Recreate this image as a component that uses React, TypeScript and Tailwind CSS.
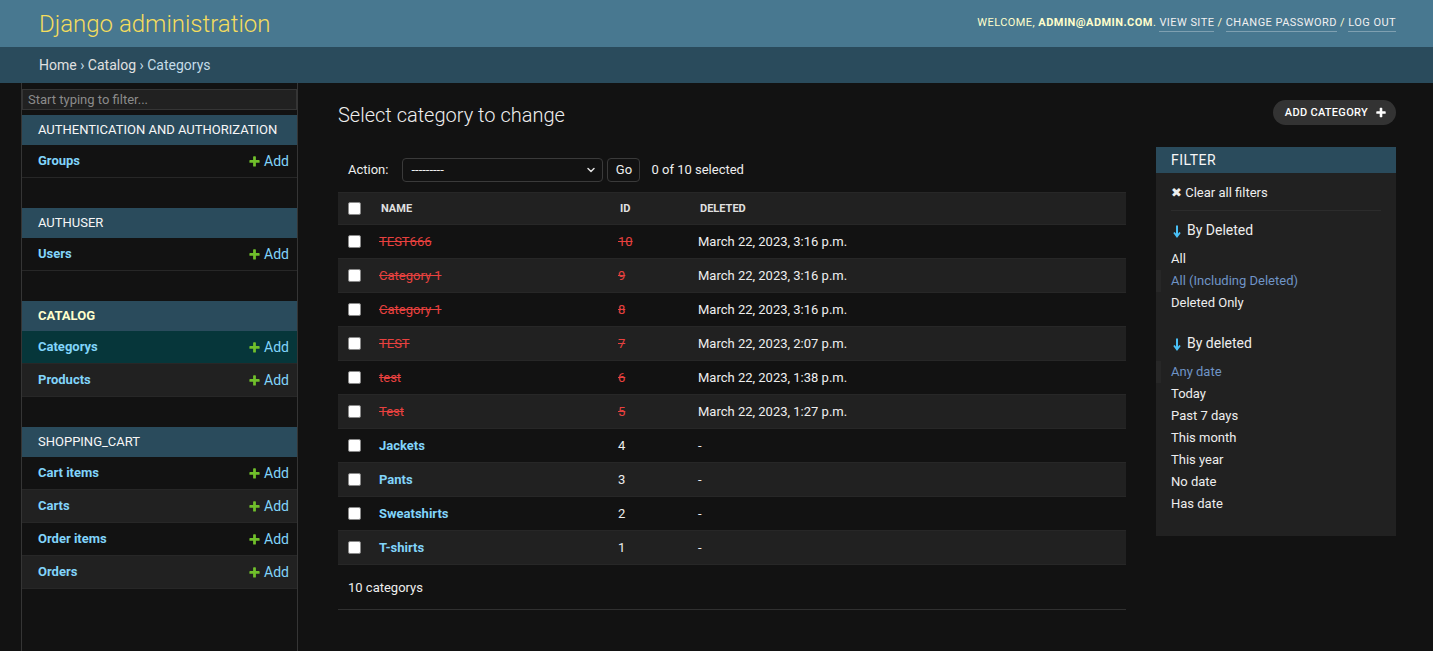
import React from "react";

const AddIcon = () => (
  <svg width="13" height="13" viewBox="0 0 1792 1792" className="mr-[3px] shrink-0">
    <path
      fill="#70bf2b"
      d="M1600 796v192q0 40-28 68t-68 28h-416v416q0 40-28 68t-68 28h-192q-40 0-68-28t-28-68v-416h-416q-40 0-68-28t-28-68v-192q0-40 28-68t68-28h416v-416q0-40 28-68t68-28h192q40 0 68 28t28 68v416h416q40 0 68 28t28 68z"
    />
  </svg>
);

const PlusWhite = () => (
  <svg width="12" height="12" viewBox="0 0 1792 1792" className="ml-[7px]">
    <path
      fill="#fff"
      d="M1600 736v192q0 40-28 68t-68 28h-416v416q0 40-28 68t-68 28h-192q-40 0-68-28t-28-68v-416h-416q-40 0-68-28t-28-68v-192q0-40 28-68t68-28h416v-416q0-40 28-68t68-28h192q40 0 68 28t28 68v416h416q40 0 68 28t28 68z"
    />
  </svg>
);

const DownArrow = () => (
  <svg width="8" height="14" viewBox="0 0 8 14" className="mr-[6px] shrink-0">
    <path d="M4 1.5V12" stroke="#4ac1f7" strokeWidth="2" />
    <path d="M1 8.5L4 12.5L7 8.5" stroke="#4ac1f7" strokeWidth="1.8" fill="none" strokeLinejoin="miter" />
  </svg>
);

const Checkbox = () => (
  <span className="block w-[13px] h-[13px] bg-white rounded-[2px] border border-[#8a8a8a]" />
);

type ModRow = { name: string; current?: boolean };
type Mod = { title: string; current?: boolean; rows: ModRow[] };

const modules: Mod[] = [
  { title: "Authentication and Authorization", rows: [{ name: "Groups" }] },
  { title: "Authuser", rows: [{ name: "Users" }] },
  {
    title: "Catalog",
    current: true,
    rows: [{ name: "Categorys", current: true }, { name: "Products" }],
  },
  {
    title: "Shopping_cart",
    rows: [{ name: "Cart items" }, { name: "Carts" }, { name: "Order items" }, { name: "Orders" }],
  },
];

type Item = { name: string; id: string; deleted: string; del: boolean };
const items: Item[] = [
  { name: "TEST666", id: "10", deleted: "March 22, 2023, 3:16 p.m.", del: true },
  { name: "Category 1", id: "9", deleted: "March 22, 2023, 3:16 p.m.", del: true },
  { name: "Category 1", id: "8", deleted: "March 22, 2023, 3:16 p.m.", del: true },
  { name: "TEST", id: "7", deleted: "March 22, 2023, 2:07 p.m.", del: true },
  { name: "test", id: "6", deleted: "March 22, 2023, 1:38 p.m.", del: true },
  { name: "Test", id: "5", deleted: "March 22, 2023, 1:27 p.m.", del: true },
  { name: "Jackets", id: "4", deleted: "-", del: false },
  { name: "Pants", id: "3", deleted: "-", del: false },
  { name: "Sweatshirts", id: "2", deleted: "-", del: false },
  { name: "T-shirts", id: "1", deleted: "-", del: false },
];

const FilterItem = ({ label, selected }: { label: string; selected?: boolean }) => (
  <li
    className={
      "h-[22px] flex items-center text-[13px] " +
      (selected
        ? "border-l-[5px] border-[#272727] pl-[10px] text-[#6f94c6]"
        : "pl-[15px] text-[#eeeeee]")
    }
  >
    {label}
  </li>
);

const FilterTitle = ({ label, className }: { label: string; className: string }) => (
  <div className={"h-[20px] flex items-center pl-[17px] text-[14px] " + className}>
    <DownArrow />
    <span className="-mt-[1px]">{label}</span>
  </div>
);

export default function App() {
  return (
    <div
      className="min-h-screen flex flex-col bg-[#121212] text-[#eeeeee]"
      style={{ fontFamily: "Roboto, 'Liberation Sans', sans-serif" }}
    >
      {/* Header */}
      <header className="h-[47px] shrink-0 bg-[#487890] flex items-center justify-between pl-[39px] pr-[37px]">
        <div className="text-[24px] font-light text-[#f5dd5d] leading-none">Django administration</div>
        <div className="text-[11px] uppercase tracking-[0.45px] text-[#ffffcc] flex items-center">
          <span>Welcome,&nbsp;</span>
          <strong className="font-bold">admin@admin.com</strong>
          <span>.&nbsp;</span>
          <span className="text-[#f0f0f0] border-b border-[rgba(255,255,255,0.3)]">View site</span>
          <span>&nbsp;/&nbsp;</span>
          <span className="text-[#f0f0f0] border-b border-[rgba(255,255,255,0.3)]">Change password</span>
          <span>&nbsp;/&nbsp;</span>
          <span className="text-[#f0f0f0] border-b border-[rgba(255,255,255,0.3)]">Log out</span>
        </div>
      </header>

      {/* Breadcrumbs */}
      <div className="h-[36px] shrink-0 bg-[#2a4b5c] flex items-center pl-[39px] text-[14px] text-[#c4dce8]">
        <span className="text-[#e0e0e0]">Home</span>
        <span>&nbsp;›&nbsp;</span>
        <span className="text-[#e0e0e0]">Catalog</span>
        <span>&nbsp;›&nbsp;</span>
        <span>Categorys</span>
      </div>

      {/* Main */}
      <div className="flex-1 flex">
        <div className="w-[22px] shrink-0 border-r border-[#353535]" />
        <nav className="w-[276px] shrink-0 border-r border-[#353535]">
          <div className="mt-[6px] h-[21px] border border-[#353535] bg-[#212121] flex items-center px-[5px] text-[13px] text-[#8b8b8b]">
            Start typing to filter...
          </div>
          <div className="mt-[5px]">
            {modules.map((m) => (
              <div key={m.title} className="mb-[30px]">
                <div
                  className={
                    "h-[30px] bg-[#2a4b5c] flex items-center pl-[16px] text-[13px] uppercase tracking-[0px] " +
                    (m.current ? "text-[#ffffcc] font-bold" : "text-[#f7f7f7]")
                  }
                >
                  {m.title}
                </div>
                {m.rows.map((r, i) => (
                  <div
                    key={r.name}
                    className={
                      "h-[33px] border-b border-[#272727] flex items-center justify-between pl-[16px] pr-[8px] text-[13px] " +
                      (r.current ? "bg-[#06363a]" : i % 2 === 1 ? "bg-[#212121]" : "")
                    }
                  >
                    <span className="font-bold text-[#81d4fa]">{r.name}</span>
                    <span className="flex items-center text-[#81d4fa] text-[14px]">
                      <AddIcon />
                      Add
                    </span>
                  </div>
                ))}
              </div>
            ))}
          </div>
        </nav>

        <main className="flex-1 pt-[20px] pl-[40px] pr-[37px]">
          <div className="flex items-start justify-between">
            <h1 className="text-[20px] font-light leading-[24px] text-[#eeeeee]">Select category to change</h1>
            <div className="-mt-[3px] h-[25px] rounded-full bg-[#333333] flex items-center pl-[12px] pr-[9px] text-[11px] font-medium uppercase tracking-[0.3px] text-white">
              <span className="pt-[1px]">Add category</span>
              <PlusWhite />
            </div>
          </div>

          <div className="mt-[20px] flex gap-[30px]">
            {/* Changelist */}
            <div className="flex-1">
              <div className="h-[45px] flex items-center pl-[10px] text-[13px]">
                <span>Action:</span>
                <div className="ml-[14px] w-[201px] h-[24px] border border-[#3a3a3a] rounded-[4px] flex items-center justify-between pl-[8px] pr-[5px]">
                  <span className="text-[13px]">---------</span>
                  <svg width="12" height="12" viewBox="0 0 24 24" fill="none" stroke="#e0e0e0" strokeWidth="3" strokeLinecap="round" strokeLinejoin="round">
                    <path d="m6 9 6 6 6-6" />
                  </svg>
                </div>
                <div className="ml-[4px] w-[33px] h-[24px] border border-[#3a3a3a] rounded-[4px] flex items-center justify-center text-[13px]">
                  Go
                </div>
                <span className="ml-[11px]">0 of 10 selected</span>
              </div>

              <div className="h-[33px] bg-[#212121] border-y border-[#272727] flex items-center text-[11px] font-bold uppercase text-[#e0e0e0]">
                <div className="w-[31px] pl-[10px] shrink-0">
                  <Checkbox />
                </div>
                <div className="w-[239px] pl-[12px] shrink-0 pt-[2px]">Name</div>
                <div className="w-[80px] pl-[12px] shrink-0 pt-[2px]">Id</div>
                <div className="flex-1 pl-[12px] pt-[2px]">Deleted</div>
              </div>

              {items.map((it, i) => (
                <div
                  key={i}
                  className={
                    "h-[34px] border-b border-[#272727] flex items-center text-[13px] " +
                    (i % 2 === 1 ? "bg-[#212121]" : "")
                  }
                >
                  <div className="w-[31px] pl-[10px] shrink-0">
                    <Checkbox />
                  </div>
                  <div className="w-[239px] pl-[10px] shrink-0">
                    {it.del ? (
                      <span className="text-[#e8413f] line-through">{it.name}</span>
                    ) : (
                      <span className="font-bold text-[#81d4fa]">{it.name}</span>
                    )}
                  </div>
                  <div className="w-[80px] pl-[10px] shrink-0">
                    {it.del ? <span className="text-[#e8413f] line-through">{it.id}</span> : it.id}
                  </div>
                  <div className="flex-1 pl-[10px]">{it.deleted}</div>
                </div>
              ))}

              <div className="h-[45px] border-b border-[#303030] flex items-center pl-[10px] pt-[1px] text-[13px]">
                10 categorys
              </div>
            </div>

            {/* Filter */}
            <div className="w-[240px] shrink-0 self-start bg-[#212121] pb-[21px]">
              <div className="h-[26px] bg-[#2a4b5c] flex items-center pl-[15px] text-[14px] uppercase tracking-[0.5px] text-[#f7f7f7]">
                Filter
              </div>
              <div className="mx-[15px] mt-[12px] pb-[9px] border-b border-[#2c2c2c] text-[13px] leading-[16px] text-[#eeeeee]">
                ✖ Clear all filters
              </div>
              <FilterTitle label="By Deleted" className="mt-[10px]" />
              <ul className="mt-[7px]">
                <FilterItem label="All" />
                <FilterItem label="All (Including Deleted)" selected />
                <FilterItem label="Deleted Only" />
              </ul>
              <FilterTitle label="By deleted" className="mt-[20px]" />
              <ul className="mt-[7px]">
                <FilterItem label="Any date" selected />
                <FilterItem label="Today" />
                <FilterItem label="Past 7 days" />
                <FilterItem label="This month" />
                <FilterItem label="This year" />
                <FilterItem label="No date" />
                <FilterItem label="Has date" />
              </ul>
            </div>
          </div>
        </main>
      </div>
    </div>
  );
}
